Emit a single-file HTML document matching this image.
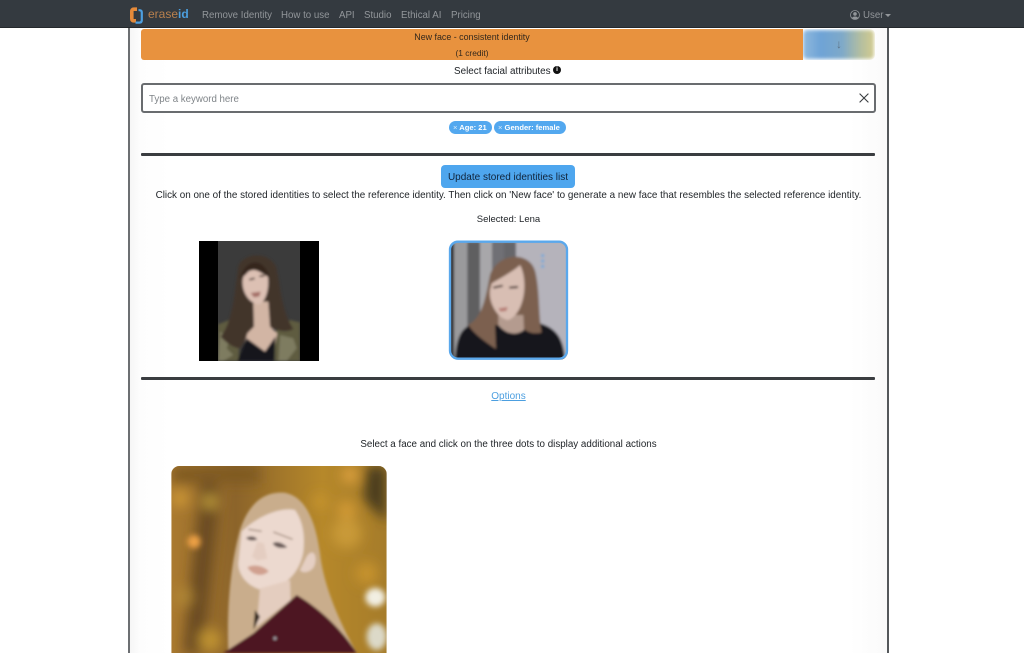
<!DOCTYPE html>
<html lang="en">
<head>
<meta charset="utf-8">
<title>eraseid</title>
<style>
html,body{margin:0;padding:0;width:1024px;height:653px;overflow:hidden;background:#fff;font-family:"Liberation Sans",sans-serif;color:#212529}
.a{position:absolute;white-space:nowrap}
.c{text-align:center}
.nav{left:0;top:0;width:1024px;height:27px;background:#343a40;border-bottom:1px solid #25292d;box-sizing:content-box}
.nl{top:9.500px;font-size:9.700px;line-height:12px;color:#92969a}
.hr{left:141px;width:734px;height:3px;background:#3a3d40;border-radius:1px}
svg{display:block}
</style>
</head>
<body>
<div class="a nav"></div>
<svg class="a" style="left:128px;top:5px" width="16" height="20" viewBox="0 0 16 20">
<path d="M9 4.200H5.800C4.400 4.200 3.800 5 3.800 6.400V13.500C3.800 15 4.400 15.800 5.800 15.800H8" fill="none" stroke="#e58a3a" stroke-width="3.600"/>
<path d="M10.500 5.200H11.500C13 5.200 13.800 6 13.800 7.500V15.300C13.800 16.800 13 17.600 11.500 17.600H7.500" fill="none" stroke="#4d9fe0" stroke-width="2.200"/>
</svg>
<div class="a" style="left:148px;top:7px;font-size:12px;line-height:15px;font-weight:400;color:#b9804d">erase<b style="color:#4c9ede">id</b></div>
<div class="a nl" style="left:202px">Remove Identity</div>
<div class="a nl" style="left:281px">How to use</div>
<div class="a nl" style="left:339px">API</div>
<div class="a nl" style="left:364px">Studio</div>
<div class="a nl" style="left:401px">Ethical AI</div>
<div class="a nl" style="left:451px">Pricing</div>
<svg class="a" style="left:850px;top:10px" width="10" height="10" viewBox="0 0 10 10">
<circle cx="5" cy="5" r="4.500" fill="none" stroke="#92969a" stroke-width=".8"/><circle cx="5" cy="3.900" r="1.800" fill="#92969a"/><path d="M2 8c.6-2 5.400-2 6 0-1.500 1.500-4.500 1.500-6 0z" fill="#92969a"/>
</svg>
<div class="a nl" style="left:863px">User</div>
<div class="a" style="left:885px;top:14px;width:0;height:0;border-left:3px solid transparent;border-right:3px solid transparent;border-top:3px solid #92969a"></div>

<!-- panel -->
<div class="a" style="left:128px;top:28px;width:761px;height:625px;box-sizing:border-box;border-left:2px solid #6c6f72;border-right:2px solid #55585b;background:linear-gradient(90deg,#f6f6f6 0,#fdfdfd 10px,#fff 40px,#fff 720px,#fafafa 757px)"></div>

<!-- orange button -->
<div class="a" style="left:141px;top:29px;width:662px;height:31px;background:#e8923e;border-radius:3px 0 0 3px"></div>
<div class="a c" style="left:141px;top:32px;width:662px;font-size:8.900px;line-height:11px;color:#33281c">New face - consistent identity</div>
<div class="a c" style="left:141px;top:48px;width:662px;font-size:8.400px;line-height:11px;color:#33281c">(1 credit)</div>
<div class="a" style="left:803px;top:29px;width:72px;height:31px;overflow:hidden;border-radius:0 5px 5px 0;background:#fff">
<div style="position:absolute;left:0;top:1px;width:71px;height:29px;border-radius:4px;background:linear-gradient(90deg,#8fb9dd 0,#6ea3d6 25%,#7ea9c9 55%,#b5bf9f 82%,#d2cb8f 100%);filter:blur(1.800px)"></div>
<div style="position:absolute;left:0;top:8px;width:72px;text-align:center;font-size:12px;line-height:15px;color:#5d7488">↓</div>
</div>

<!-- attributes -->
<div class="a" style="left:454px;top:65px;font-size:9.900px;line-height:12px;color:#212529;padding-top:.5px">Select facial attributes</div>
<div class="a" style="left:553px;top:66px;width:8px;height:8px;border-radius:50%;background:#111;color:#fff;font-size:6.500px;line-height:8px;text-align:center;font-weight:700">i</div>

<div class="a" style="left:141px;top:83px;width:734.500px;height:30px;box-sizing:border-box;border:2px solid #696c6f;border-radius:3px;background:#fff"></div>
<div class="a" style="left:149px;top:93.500px;font-size:9.700px;line-height:12px;color:#7f8488">Type a keyword here</div>
<svg class="a" style="left:859px;top:93px" width="10" height="10" viewBox="0 0 10 10"><path d="M.6.6 9.400 9.400M9.400.6.6 9.400" stroke="#3a3d40" stroke-width="1.100" fill="none"/></svg>

<div class="a" style="left:449px;top:121px;width:43px;height:13px;border-radius:7px;background:#53a8ef"></div>
<div class="a" style="left:453px;top:122px;font-size:7.600px;line-height:11px;color:#fff;font-weight:700"><span style="font-weight:400;color:#dcecfa">×</span> Age: 21</div>
<div class="a" style="left:494px;top:121px;width:72px;height:13px;border-radius:7px;background:#53a8ef"></div>
<div class="a" style="left:498px;top:122px;font-size:7.600px;line-height:11px;color:#fff;font-weight:700"><span style="font-weight:400;color:#dcecfa">×</span> Gender: female</div>

<div class="a hr" style="top:153px"></div>

<div class="a c" style="left:441px;top:165px;width:134px;height:23px;border-radius:4px;background:#4ea6ee;color:#10233a;font-size:10px;line-height:25px">Update stored identities list</div>
<div class="a c" style="left:141px;top:190px;width:735px;font-size:9.880px;line-height:12px">Click on one of the stored identities to select the reference identity. Then click on 'New face' to generate a new face that resembles the selected reference identity.</div>
<div class="a c" style="left:141px;top:214px;width:735px;font-size:9.500px;line-height:12px">Selected: Lena</div>

<!-- identity photos: viewBox follows 3x coordinates -->
<svg class="a" style="left:190px;top:235px" width="390" height="130" viewBox="0 0 1170 390">
<defs>
<filter id="b1" x="-20%" y="-20%" width="140%" height="140%"><feGaussianBlur stdDeviation="4"/></filter>
<clipPath id="p1"><rect x="84" y="18" width="246" height="360"/></clipPath>
<clipPath id="p2"><rect x="780" y="20" width="354" height="354" rx="24"/></clipPath>
</defs>
<rect x="27" y="18" width="360" height="360" fill="#000"/>
<g clip-path="url(#p1)">
<rect x="84" y="18" width="246" height="360" fill="#3b3b3b"/>
<g filter="url(#b1)">
<path d="M84 268 130 250 150 290 145 378H84ZM255 290 300 255 330 262V378H255Z" fill="#5e5c40"/>
<path d="M90 290l30 20-10 30 20 20-30 18H84ZM270 300l40 10 10 30-30 38h-25z" fill="#7e7c60"/>
<path d="M145 95C160 52 235 48 258 95 272 150 272 225 310 282 285 295 265 285 250 280L180 290 150 340C130 340 105 320 92 305 130 260 135 160 145 95Z" fill="#43342b"/>
<path d="M190 200 235 200 240 275 262 295 245 378H150L172 295 192 275Z" fill="#d2b5a4"/>
<path d="M170 310 225 350 256 305 252 378H142Z" fill="#17171a"/>
<path d="M165 105C185 85 228 92 234 128 238 165 225 205 205 208 180 205 155 175 158 135Z" fill="#dcc0b3"/>
<path d="M150 130C165 72 220 62 240 128 215 118 200 95 175 110 168 118 162 125 150 130Z" fill="#35271f"/>
<path d="M182 174 212 170 208 184 192 187Z" fill="#a56f68"/>
<path d="M178 134l16-4M208 124l16-2" stroke="#3d2a24" stroke-width="5"/>
</g>
</g>
<g clip-path="url(#p2)">
<rect x="780" y="20" width="354" height="354" fill="#aaa8ae"/>
<g filter="url(#b1)">
<rect x="780" y="20" width="12" height="354" fill="#26282a"/>
<rect x="792" y="20" width="40" height="354" fill="#9a9a9c"/>
<rect x="832" y="20" width="38" height="354" fill="#5e5e60"/>
<rect x="870" y="20" width="36" height="354" fill="#a8a7aa"/>
<rect x="906" y="20" width="36" height="230" fill="#707074"/>
<rect x="942" y="20" width="36" height="200" fill="#66666a"/>
<rect x="978" y="20" width="156" height="354" fill="#b5b3bb"/>
<path d="M795 374C800 300 815 275 860 262L1050 265C1100 280 1120 310 1125 374Z" fill="#16161a"/>
<path d="M900 120C925 50 1020 48 1036 110 1050 170 1045 240 1055 292 1030 300 1010 290 1000 280L915 270 918 342C885 320 850 295 835 270 880 245 888 180 900 120Z" fill="#7c6150"/>
<path d="M925 240 1000 240 1002 285C975 305 945 295 925 270Z" fill="#b49b8f"/>
<path d="M905 145C940 125 975 105 990 90 1015 135 1005 235 955 255 925 253 895 205 900 165Z" fill="#d8beb3"/>
<path d="M910 158l28-6M958 158l26-2" stroke="#3f2d28" stroke-width="6"/>
<path d="M925 220l28-4-4 12-18 2Z" fill="#b77e76"/>
<circle cx="1058" cy="62" r="4.500" fill="#6aa7dc"/><circle cx="1058" cy="78" r="4.500" fill="#6aa7dc"/><circle cx="1058" cy="94" r="4.500" fill="#6aa7dc"/>
</g>
</g>
<rect x="780" y="20" width="351" height="351" rx="24" fill="none" stroke="#5aa8ec" stroke-width="7"/>
</svg>

<div class="a hr" style="top:377px"></div>

<div class="a c" style="left:141px;top:391px;width:735px;font-size:10px;line-height:12px;color:#4c9fe0;text-decoration:underline">Options</div>
<div class="a c" style="left:141px;top:439px;width:735px;font-size:9.800px;line-height:12px">Select a face and click on the three dots to display additional actions</div>

<!-- big photo -->
<svg class="a" style="left:160px;top:460px" width="240" height="193" viewBox="0 0 720 579">
<defs>
<clipPath id="p3"><rect x="34" y="18" width="646" height="600" rx="24"/></clipPath>
<linearGradient id="bg3" x1="0" y1="0" x2="1" y2="0"><stop offset="0" stop-color="#aa7a30"/><stop offset=".3" stop-color="#8c642a"/><stop offset=".7" stop-color="#b6882a"/><stop offset="1" stop-color="#a67c2a"/></linearGradient>
<filter id="b3" x="-40%" y="-40%" width="180%" height="180%"><feGaussianBlur stdDeviation="18"/></filter>
<filter id="b5" x="-40%" y="-40%" width="180%" height="180%"><feGaussianBlur stdDeviation="9"/></filter>
<filter id="b4" x="-20%" y="-20%" width="140%" height="140%"><feGaussianBlur stdDeviation="4"/></filter>
</defs>
<g clip-path="url(#p3)">
<rect x="34" y="18" width="646" height="600" fill="url(#bg3)"/>
<g filter="url(#b3)">
<path d="M130 18 180 100 130 579H70L110 200Z" fill="#6b4c20"/>
<path d="M620 18h60v170l-70-70Z" fill="#4c3c1c"/>
<path d="M34 18H300V70H34Z" fill="#7f5a24"/>
<circle cx="570" cy="45" r="24" fill="#e0a33f"/>
<circle cx="60" cy="115" r="28" fill="#c99434"/>
<circle cx="150" cy="125" r="22" fill="#bd9a3b"/>
<circle cx="480" cy="125" r="22" fill="#c8952e"/>
<circle cx="560" cy="150" r="28" fill="#d29a35"/>
<circle cx="560" cy="220" r="45" fill="#c99a38"/>
<circle cx="70" cy="410" r="28" fill="#b08634"/>
<circle cx="150" cy="540" r="34" fill="#bf9333"/>
<circle cx="620" cy="340" r="34" fill="#c6932e"/>
</g>
<g filter="url(#b5)">
<circle cx="102" cy="245" r="20" fill="#eda044"/>
<ellipse cx="646" cy="412" rx="30" ry="28" fill="#f2efe2"/>
<ellipse cx="650" cy="530" rx="30" ry="40" fill="#dcd9c8"/>
</g>
<g filter="url(#b4)">
<path d="M205 579C200 450 210 320 240 210 270 120 320 95 370 98 430 105 465 170 480 280 490 370 530 470 590 579Z" fill="#c9ad8c"/>
<path d="M245 215C290 170 360 140 405 150 430 185 435 230 430 275 420 340 370 385 315 392 270 385 235 350 235 310Z" fill="#ecd9cf"/>
<path d="M440 290C460 260 475 290 462 320 450 340 425 340 420 330Z" fill="#e5cfc3"/>
<path d="M265 208 305 214M340 216 398 238" stroke="#a18a7c" stroke-width="4" fill="none"/>
<path d="M258 234C270 226 285 228 292 238 278 244 266 242 258 234ZM338 250C350 242 368 248 382 262 362 266 346 264 338 250Z" fill="#6b5b58"/>
<path d="M292 245 276 290 292 302 322 296 312 250Z" fill="#e4cdc1"/>
<path d="M262 322C280 312 310 316 326 334 310 350 280 350 262 322Z" fill="#d0a08f"/>
<path d="M300 385 390 360 392 420 290 500Z" fill="#e4cdbf"/>
<path d="M190 579 280 520 410 405C470 440 540 500 590 579Z" fill="#4e1522"/>
<path d="M285 450 300 470 280 510Z" fill="#2e2018"/>
<circle cx="345" cy="535" r="5" fill="#a09aa0"/>
</g>
</g>
</svg>
</body>
</html>
